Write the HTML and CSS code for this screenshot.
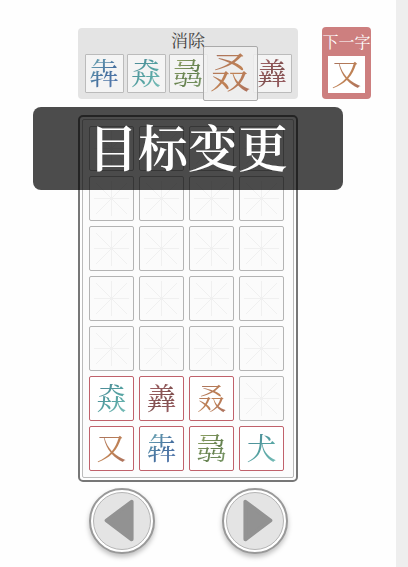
FILE: index.html
```
<!DOCTYPE html>
<html lang="zh-CN">
<head>
    <meta charset="UTF-8">
    <meta name="viewport" content="width=device-width, initial-scale=1.0">
    <title>消除</title>
    <link rel="stylesheet" href="styles.css">
</head>
<body>
    <main class="game">
        <header class="top">
            <section class="target">
                <h2 class="target-title">消除</h2>
                <div class="target-list">
                    <div class="tile"><span class="char blue">犇</span></div>
                    <div class="tile"><span class="char teal">猋</span></div>
                    <div class="tile"><span class="char green">骉</span></div>
                    <div class="tile current"><span class="char orange">叒</span></div>
                    <div class="tile"><span class="char red">羴</span></div>
                </div>
            </section>
            <section class="next">
                <h2 class="next-title">下一字</h2>
                <div class="next-tile"><span class="char orange">又</span></div>
            </section>
        </header>

        <div class="board">
            <div class="grid">
                <div class="cell"></div>
                <div class="cell"></div>
                <div class="cell"></div>
                <div class="cell"></div>

                <div class="cell"></div>
                <div class="cell"></div>
                <div class="cell"></div>
                <div class="cell"></div>

                <div class="cell"></div>
                <div class="cell"></div>
                <div class="cell"></div>
                <div class="cell"></div>

                <div class="cell"></div>
                <div class="cell"></div>
                <div class="cell"></div>
                <div class="cell"></div>

                <div class="cell"></div>
                <div class="cell"></div>
                <div class="cell"></div>
                <div class="cell"></div>

                <div class="cell filled"><span class="char teal">猋</span></div>
                <div class="cell filled"><span class="char red">羴</span></div>
                <div class="cell filled"><span class="char orange">叒</span></div>
                <div class="cell"></div>

                <div class="cell filled"><span class="char orange">又</span></div>
                <div class="cell filled"><span class="char blue">犇</span></div>
                <div class="cell filled"><span class="char green">骉</span></div>
                <div class="cell filled"><span class="char teal">犬</span></div>
            </div>
        </div>

        <div class="controls">
            <button class="move" type="button" aria-label="左">
                <svg class="arrow" viewBox="0 0 58 58" aria-hidden="true"><path d="M39 9v39L13 28.500z"/></svg>
            </button>
            <button class="move" type="button" aria-label="右">
                <svg class="arrow" viewBox="0 0 58 58" aria-hidden="true"><path d="M19 9v39L45 28.500z"/></svg>
            </button>
        </div>

        <div class="toast" role="status">目标变更</div>
    </main>
    <div class="edge"></div>
</body>
</html>
```
FILE: styles.css
```
* {
    margin: 0;
    padding: 0;
    box-sizing: border-box;
}

body {
    display: flex;
    min-height: 100vh;
    background: #fefefe;
    color: #444;
    font-family: "Liberation Serif", "Noto Serif CJK SC", "Noto Sans CJK SC", serif;
    font-weight: 400;
}

.game {
    position: relative;
    flex: 1;
    min-width: 0;
    padding: 27px 20px 0 0;
}

.edge {
    flex: none;
    width: 12px;
    background: #eee;
}

h2 {
    font-weight: 400;
    text-align: center;
}

/* 目标 */
.top {
    display: grid;
    grid-template-columns: 1fr 220px 1fr;
}

.target {
    grid-column: 2;
    margin-top: 1px;
    padding-top: 4px;
    height: 71px;
    background: #e4e4e4;
    border-radius: 4px;
}

.target-title {
    font-size: 17px;
    line-height: 20px;
}

.target-list {
    display: flex;
    justify-content: center;
    align-items: center;
    gap: 3px;
    height: 43px;
}

.tile {
    display: flex;
    justify-content: center;
    align-items: center;
    flex: none;
    width: 39px;
    height: 39px;
    background: #f4f4f4;
    border: 1px solid #bbb;
    border-radius: 1px;
    font-size: 30px;
}

.current {
    z-index: 1;
    width: 55px;
    height: 55px;
    margin: 0 -8px;
    background: rgba(240, 240, 240, 0.85);
    border-color: #aaa;
    border-radius: 2px;
    font-size: 42px;
}

/* 下一字 */
.next {
    grid-column: 3;
    justify-self: end;
    width: 49px;
    height: 72px;
    margin-right: 5px;
    padding: 6px;
    background: #cd7f7f;
    border-radius: 4px;
}

.next-title {
    margin: 0 -6px 3px;
    color: #fff;
    font-size: 16px;
    line-height: 20px;
    white-space: nowrap;
}

.next-tile {
    display: flex;
    justify-content: center;
    align-items: center;
    height: 37px;
    background: #fff;
    font-size: 30px;
}

.char {
    line-height: 1;
    color: transparent;
    -webkit-background-clip: text;
    background-clip: text;
}

.blue { background-image: linear-gradient(135deg, #6faab4, #46709f 55%, #5d7fb5); }
.teal { background-image: linear-gradient(135deg, #4a8594, #55a3a2 55%, #7cc0bb); }
.green { background-image: linear-gradient(135deg, #93a468, #64804e 55%, #83a070); }
.orange { background-image: linear-gradient(135deg, #a56f5c, #c08255 55%, #a96f60); }
.red { background-image: linear-gradient(135deg, #a66468, #80504f 55%, #a5636b); }

/* 棋盘 */
.board {
    width: 220px;
    margin: 16px auto 0;
    padding: 2px;
    border: 2px solid #777;
    border-radius: 5px;
    background: #fff;
}

.grid {
    display: grid;
    grid-template-columns: repeat(4, 45px);
    gap: 5px;
    padding: 6px;
    border: 1px solid #bbb;
    border-radius: 2px;
    background: #fcfcfc;
}

.cell {
    display: flex;
    justify-content: center;
    align-items: center;
    height: 45px;
    border: 1px solid #b4b4b4;
    border-radius: 2px;
    background:
        linear-gradient(#f0f0f0, #f0f0f0) center / 1px 35px no-repeat,
        linear-gradient(#f0f0f0, #f0f0f0) center / 35px 1px no-repeat,
        linear-gradient(45deg, transparent 49%, #f0f0f0 49%, #f0f0f0 51%, transparent 51%) center / 31px 31px no-repeat,
        linear-gradient(-45deg, transparent 49%, #f0f0f0 49%, #f0f0f0 51%, transparent 51%) center / 31px 31px no-repeat,
        #fbfbfb;
    font-size: 30px;
}

.filled {
    border-color: #c0616b;
    background: #fff;
}

/* 按钮 */
.controls {
    display: flex;
    justify-content: center;
    gap: 67px;
    margin-top: 6px;
}

.move {
    width: 66px;
    height: 66px;
    padding: 2px;
    border: 2px solid #999;
    border-radius: 50%;
    background: #fff;
    box-shadow: 0 3px 5px rgba(0, 0, 0, 0.25);
    cursor: pointer;
}

.arrow {
    display: block;
    width: 58px;
    height: 58px;
    border: 1px solid #b5b5b5;
    border-radius: 50%;
    background: #e4e4e4;
    fill: #929292;
    stroke: #929292;
    stroke-width: 4;
    stroke-linejoin: round;
}

/* 提示 */
.toast {
    position: absolute;
    z-index: 2;
    top: 107px;
    left: 33px;
    right: 53px;
    padding-top: 4px;
    border-radius: 8px;
    background: rgba(0, 0, 0, 0.7);
    color: #fff;
    font-size: 50px;
    font-weight: 600;
    line-height: 79px;
    text-align: center;
}
```
